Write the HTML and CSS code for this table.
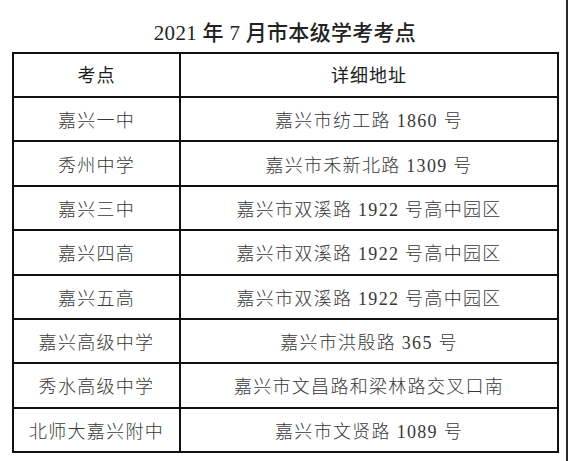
FILE: index.html
```html
<!DOCTYPE html>
<html lang="zh-CN">
<head>
<meta charset="utf-8">
<title>2021年7月市本级学考考点</title>
<link rel="stylesheet" href="styles.css">
</head>
<body>
<div class="page">
  <div class="title">2021 年 7 月市本级学考考点</div>
  <div class="grid">
    <div class="cell head">考点</div>
    <div class="cell head">详细地址</div>
    <div class="cell">嘉兴一中</div>
    <div class="cell">嘉兴市纺工路 1860 号</div>
    <div class="cell">秀州中学</div>
    <div class="cell">嘉兴市禾新北路 1309 号</div>
    <div class="cell">嘉兴三中</div>
    <div class="cell">嘉兴市双溪路 1922 号高中园区</div>
    <div class="cell">嘉兴四高</div>
    <div class="cell">嘉兴市双溪路 1922 号高中园区</div>
    <div class="cell">嘉兴五高</div>
    <div class="cell">嘉兴市双溪路 1922 号高中园区</div>
    <div class="cell">嘉兴高级中学</div>
    <div class="cell">嘉兴市洪殷路 365 号</div>
    <div class="cell">秀水高级中学</div>
    <div class="cell">嘉兴市文昌路和梁林路交叉口南</div>
    <div class="cell">北师大嘉兴附中</div>
    <div class="cell">嘉兴市文贤路 1089 号</div>
  </div>
</div>
</body>
</html>
```

FILE: styles.css
```css
html, body {
  margin: 0;
  padding: 0;
  background: #ffffff;
}

.page {
  width: 566px;
  height: 461px;
  border-right: 2px solid #2a2a2a;
  background: #ffffff;
  font-family: "Liberation Serif", "Noto Sans CJK SC", serif;
  color: #333333;
  overflow: hidden;
}

.title {
  height: 52px;
  display: flex;
  align-items: center;
  justify-content: center;
  box-sizing: border-box;
  padding-top: 10px;
  margin-left: 4px;
  font-size: 21px;
  font-weight: 500;
  color: #222222;
  letter-spacing: 0.3px;
}

.grid {
  margin-left: 12px;
  width: 547px;
  box-sizing: border-box;
  display: grid;
  grid-template-columns: 167px 378px;
  grid-template-rows: 44px repeat(8, 44.375px);
  border-left: 2px solid #111111;
  border-top: 2px solid #111111;
}

.cell {
  box-sizing: border-box;
  border-right: 2px solid #111111;
  border-bottom: 2px solid #111111;
  display: flex;
  align-items: center;
  justify-content: center;
  font-size: 18px;
  font-weight: 300;
  letter-spacing: 1.3px;
  color: #383838;
  white-space: nowrap;
}

.head {
  font-weight: 400;
  color: #1e1e1e;
  letter-spacing: 1px;
  padding-bottom: 2px;
}
```
